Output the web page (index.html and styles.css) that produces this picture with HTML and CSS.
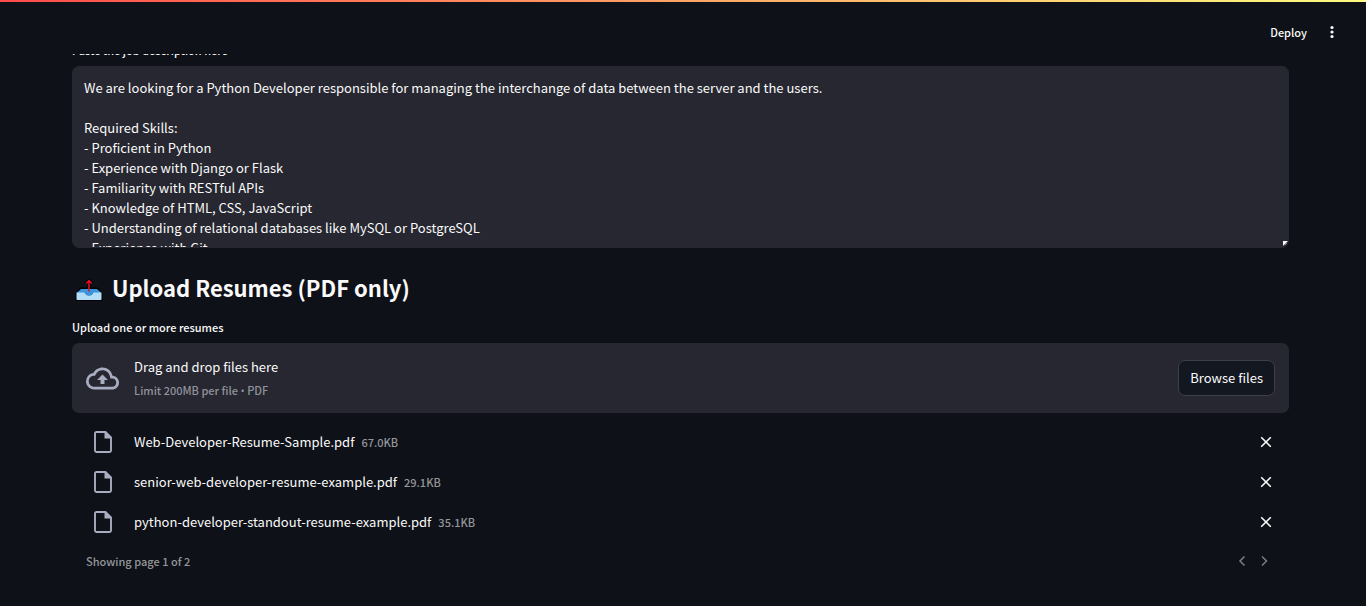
FILE: index.html
```html
<!DOCTYPE html>
<html lang="en">
<head>
<meta charset="utf-8">
<meta name="viewport" content="width=device-width, initial-scale=1">
<title>Upload Resumes</title>
<link rel="stylesheet" href="styles.css">
</head>
<body>
<header class="toolbar">
  <button class="deploy" type="button">Deploy</button>
  <button class="menu" type="button" aria-label="Main menu">
    <svg width="18" height="18" viewBox="0 0 18 18" fill="currentColor"><circle cx="9" cy="4.500" r="1.600"/><circle cx="9" cy="9" r="1.600"/><circle cx="9" cy="13.500" r="1.600"/></svg>
  </button>
</header>
<main class="page">
  <label class="label label-job" for="job">Paste the job description here</label>
  <div class="textbox">
    <textarea class="job" id="job" spellcheck="false">We are looking for a Python Developer responsible for managing the interchange of data between the server and the users.

Required Skills:
- Proficient in Python
- Experience with Django or Flask
- Familiarity with RESTful APIs
- Knowledge of HTML, CSS, JavaScript
- Understanding of relational databases like MySQL or PostgreSQL
- Experience with Git</textarea>
    <svg class="grip" width="6" height="6" viewBox="0 0 6 6"><path d="M0 0h5L0 5z" fill="#fafafa"/><path d="M2 4L4 2" stroke="#85868c"/></svg>
  </div>
  <h2 class="heading">
    <svg class="tray" width="30" height="24" viewBox="0 0 30 24" aria-hidden="true">
      <path d="M7 11h16l4 4v6.500H3V15z" fill="#000" stroke="#000" stroke-width="3" stroke-linejoin="round"/>
      <path d="M15 13V4M12.300 5.500L15 2.500l2.700 3" fill="none" stroke="#000" stroke-width="3.500" stroke-linejoin="round"/>
      <path d="M7 11h16l4.500 4h-25z" fill="#3b94dc"/>
      <path d="M2.500 14.500h7.300c.8 0 1.200.5 1.700 1.200 1.800 2.200 5.200 2.200 7 0 .5-.7.900-1.200 1.700-1.200h7.300v6.700a.8.800 0 0 1-.8.800H3.300a.8.800 0 0 1-.8-.8z" fill="#b3dcf7"/>
      <path d="M10.500 14c1.500 5 7.500 5 9 0z" fill="#3b94dc"/>
      <path d="M15 13.500V3M12.300 5.500L15 2.500l2.700 3" fill="none" stroke="#e81224" stroke-width="1.500"/>
    </svg>
    <span>Upload Resumes (PDF only)</span>
  </h2>
  <label class="label label-files" for="browse">Upload one or more resumes</label>
  <section class="dropzone">
    <svg class="cloud" width="33" height="33" viewBox="0 0 24 24" fill="currentColor"><path d="M19.350 10.040A7.490 7.490 0 0 0 12 4C9.110 4 6.600 5.640 5.350 8.040A5.994 5.994 0 0 0 0 14c0 3.310 2.690 6 6 6h13c2.760 0 5-2.240 5-5 0-2.640-2.050-4.780-4.650-4.960zM19 18H6c-2.210 0-4-1.790-4-4 0-2.050 1.530-3.760 3.560-3.970l1.070-.11.5-.95A5.469 5.469 0 0 1 12 6c2.620 0 4.880 1.860 5.390 4.430l.3 1.500 1.530.11A2.980 2.980 0 0 1 22 15c0 1.650-1.350 3-3 3zM8 13h2.550v3h2.900v-3H16l-4-4z"/></svg>
    <div class="hint">
      <span>Drag and drop files here</span>
      <small class="muted">Limit 200MB per file <span class="bullet">•</span> PDF</small>
    </div>
    <button class="browse" id="browse" type="button">Browse files</button>
  </section>
  <ul class="files">
    <li class="file">
      <svg class="doc" width="26" height="26" viewBox="0 0 26 26"><path d="M15.500 3H6.500a1.500 1.500 0 0 0-1.500 1.500v17A1.500 1.500 0 0 0 6.500 23h13a1.500 1.500 0 0 0 1.500-1.500V8.500z" fill="none" stroke="currentColor" stroke-width="1.900" stroke-linejoin="round"/><path d="M14.500 3v6.500H21V8.500L15.500 3z" fill="currentColor"/></svg>
      <span>Web-Developer-Resume-Sample.pdf</span><small class="muted">67.0KB</small>
      <button class="remove" type="button" aria-label="Remove Web-Developer-Resume-Sample.pdf"><svg width="18" height="18" viewBox="0 0 18 18"><path d="M4.200 4.200l9.600 9.600M13.800 4.200L4.200 13.800" stroke="currentColor" stroke-width="1.600"/></svg></button>
    </li>
    <li class="file">
      <svg class="doc" width="26" height="26" viewBox="0 0 26 26"><path d="M15.500 3H6.500a1.500 1.500 0 0 0-1.500 1.500v17A1.500 1.500 0 0 0 6.500 23h13a1.500 1.500 0 0 0 1.500-1.500V8.500z" fill="none" stroke="currentColor" stroke-width="1.900" stroke-linejoin="round"/><path d="M14.500 3v6.500H21V8.500L15.500 3z" fill="currentColor"/></svg>
      <span>senior-web-developer-resume-example.pdf</span><small class="muted">29.1KB</small>
      <button class="remove" type="button" aria-label="Remove senior-web-developer-resume-example.pdf"><svg width="18" height="18" viewBox="0 0 18 18"><path d="M4.200 4.200l9.600 9.600M13.800 4.200L4.200 13.800" stroke="currentColor" stroke-width="1.600"/></svg></button>
    </li>
    <li class="file">
      <svg class="doc" width="26" height="26" viewBox="0 0 26 26"><path d="M15.500 3H6.500a1.500 1.500 0 0 0-1.500 1.500v17A1.500 1.500 0 0 0 6.500 23h13a1.500 1.500 0 0 0 1.500-1.500V8.500z" fill="none" stroke="currentColor" stroke-width="1.900" stroke-linejoin="round"/><path d="M14.500 3v6.500H21V8.500L15.500 3z" fill="currentColor"/></svg>
      <span>python-developer-standout-resume-example.pdf</span><small class="muted">35.1KB</small>
      <button class="remove" type="button" aria-label="Remove python-developer-standout-resume-example.pdf"><svg width="18" height="18" viewBox="0 0 18 18"><path d="M4.200 4.200l9.600 9.600M13.800 4.200L4.200 13.800" stroke="currentColor" stroke-width="1.600"/></svg></button>
    </li>
  </ul>
  <nav class="pager" aria-label="Pages of files">
    <small class="muted">Showing page 1 of 2</small>
    <button class="step" type="button" aria-label="Previous page"><svg width="18" height="18" viewBox="0 0 18 18"><path d="M11.500 4.500L7 9l4.500 4.500" fill="none" stroke="currentColor" stroke-width="1.600"/></svg></button>
    <button class="step" type="button" aria-label="Next page"><svg width="18" height="18" viewBox="0 0 18 18"><path d="M7 4.500L11.500 9 7 13.500" fill="none" stroke="currentColor" stroke-width="1.600"/></svg></button>
  </nav>
</main>
</body>
</html>
```
FILE: styles.css
```css
* { box-sizing: border-box; }

body {
  margin: 0;
  background: #0e1117;
  color: #fafafa;
  font: 400 13px/20px "Noto Sans CJK SC", "Noto Sans", sans-serif;
}

button {
  border: 0;
  padding: 0;
  background: none;
  color: inherit;
  font: inherit;
  cursor: pointer;
}

svg { display: block; flex: none; }

.toolbar {
  position: relative;
  display: flex;
  align-items: center;
  justify-content: flex-end;
  gap: 16px;
  height: 54px;
  padding: 10px 25px 0 0;
  background: #0e1117;
}

.toolbar::before {
  content: "";
  position: absolute;
  inset: 0 0 auto;
  height: 2px;
  background: linear-gradient(90deg, #ff4b4b, #fffd80);
}

.deploy { font-size: 11px; font-weight: 500; }

.page {
  display: flex;
  flex-direction: column;
  overflow: hidden;
  padding: 0 77px 28px 72px;
}

.label { font-size: 11px; font-weight: 500; }
.label-job { margin: -14px 0 6px; }

.textbox { position: relative; }

.job {
  display: block;
  width: 100%;
  height: 182px;
  padding: 11px;
  border: 1px solid #262730;
  border-radius: 7px;
  background: #262730;
  color: inherit;
  font: inherit;
  overflow: hidden;
  resize: none;
  outline: 0;
}

.grip { position: absolute; right: 0; bottom: 1px; }

.heading {
  display: flex;
  align-items: center;
  gap: 8px;
  margin: 22px 0 13px;
  padding-left: 2px;
  font-size: 22px;
  font-weight: 700;
  line-height: 34px;
}

.tray { align-self: flex-end; margin-bottom: 2px; }

.label-files { margin-bottom: 6px; }

.dropzone {
  display: flex;
  align-items: center;
  gap: 15px;
  height: 70px;
  padding: 0 14px;
  border-radius: 7px;
  background: #262730;
}

.cloud, .doc { color: #a9adc1; }

.hint { display: grid; gap: 3px; margin-right: auto; padding-top: 2px; }

.muted { color: #94969a; font-size: 11px; font-weight: 500; }
.dropzone .muted { color: #91929a; }
.bullet { font-family: "Open Sans", sans-serif; }

.browse {
  height: 36px;
  padding: 0 11px;
  border: 1px solid #3d4048;
  border-radius: 7px;
  background: #131720;
}

.files {
  display: grid;
  gap: 14px;
  margin: 16px 0 0;
  padding: 0 14px 0 18px;
  list-style: none;
}

.file { display: flex; align-items: center; gap: 7px; }
.doc { margin-right: 11px; }
.remove { margin-left: auto; }

.pager {
  display: flex;
  align-items: center;
  gap: 4px;
  margin-top: 16px;
  padding: 0 16px 0 14px;
}

.pager .muted { margin-right: auto; }
.step { color: #777a7f; }
```
